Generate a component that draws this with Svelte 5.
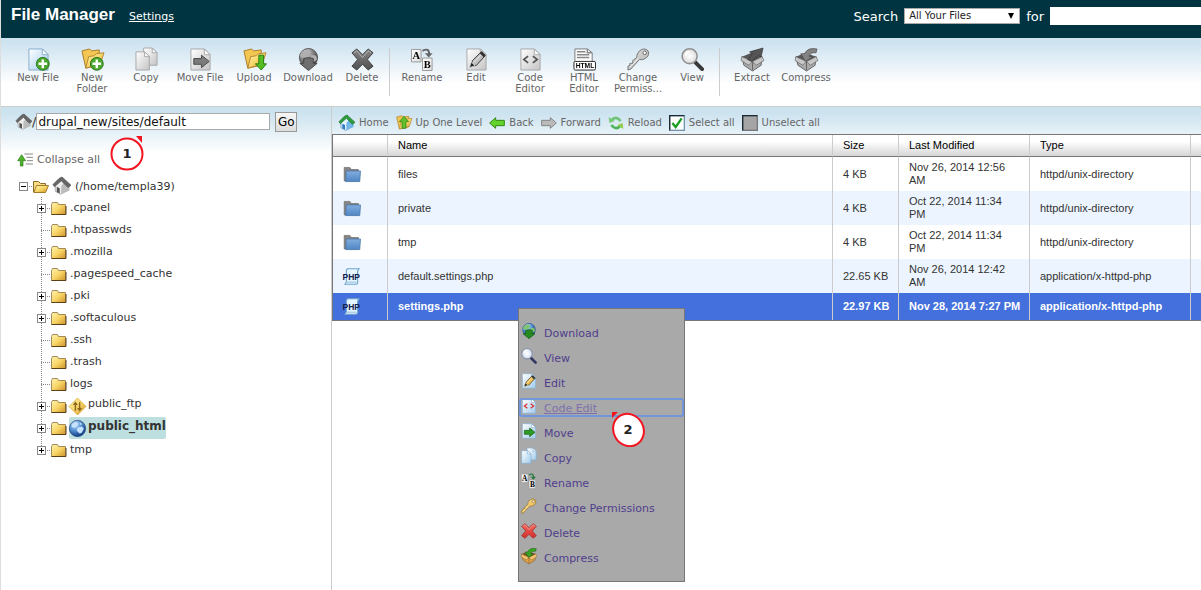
<script>
	let path = $state('drupal_new/sites/default');
	let scope = $state('All Your Files');
	let query = $state('');
	let selected = $state('settings.php');

	const tools = [
		[
			{ icon: 'newfile', label: 'New File', color: true },
			{ icon: 'newfolder', label: 'New Folder', color: true },
			{ icon: 'copy', label: 'Copy' },
			{ icon: 'move', label: 'Move File' },
			{ icon: 'upload', label: 'Upload', color: true },
			{ icon: 'download', label: 'Download' },
			{ icon: 'delete', label: 'Delete' }
		],
		[
			{ icon: 'rename', label: 'Rename' },
			{ icon: 'edit', label: 'Edit' },
			{ icon: 'code', label: 'Code Editor' },
			{ icon: 'html', label: 'HTML Editor' },
			{ icon: 'key', label: 'Change Permiss...' },
			{ icon: 'view', label: 'View' }
		],
		[
			{ icon: 'extract', label: 'Extract' },
			{ icon: 'compress', label: 'Compress' }
		]
	];

	const folders = [
		{ name: '.cpanel', open: true },
		{ name: '.htpasswds' },
		{ name: '.mozilla', open: true },
		{ name: '.pagespeed_cache' },
		{ name: '.pki', open: true },
		{ name: '.softaculous', open: true },
		{ name: '.ssh' },
		{ name: '.trash' },
		{ name: 'logs' },
		{ name: 'public_ftp', open: true, icon: 'ftp' },
		{ name: 'public_html', open: true, icon: 'globe', active: true },
		{ name: 'tmp', open: true }
	];

	const nav = [
		{ icon: 'home', label: 'Home' },
		{ icon: 'up', label: 'Up One Level' },
		{ icon: 'back', label: 'Back' },
		{ icon: 'forward', label: 'Forward' },
		{ icon: 'reload', label: 'Reload' },
		{ icon: 'check', label: 'Select all' },
		{ icon: 'uncheck', label: 'Unselect all' }
	];

	const files = [
		{ name: 'files', size: '4 KB', date: 'Nov 26, 2014 12:56 AM', type: 'httpd/unix-directory' },
		{ name: 'private', size: '4 KB', date: 'Oct 22, 2014 11:34 PM', type: 'httpd/unix-directory' },
		{ name: 'tmp', size: '4 KB', date: 'Oct 22, 2014 11:34 PM', type: 'httpd/unix-directory' },
		{ name: 'default.settings.php', size: '22.65 KB', date: 'Nov 26, 2014 12:42 AM', type: 'application/x-httpd-php' },
		{ name: 'settings.php', size: '22.97 KB', date: 'Nov 28, 2014 7:27 PM', type: 'application/x-httpd-php' }
	];

	const menu = [
		{ icon: 'download', label: 'Download' },
		{ icon: 'view', label: 'View' },
		{ icon: 'edit', label: 'Edit' },
		{ icon: 'code', label: 'Code Edit', focus: true },
		{ icon: 'move', label: 'Move' },
		{ icon: 'copy', label: 'Copy' },
		{ icon: 'rename', label: 'Rename' },
		{ icon: 'key', label: 'Change Permissions' },
		{ icon: 'delete', label: 'Delete' },
		{ icon: 'compress', label: 'Compress' }
	];
</script>

{#snippet page()}
	<path d="M2 1h14l6 6v16H2z" fill="url(#paper)" stroke="#86aecb" />
	<path d="M16 1v6h6z" fill="#fff" stroke="#86aecb" />
{/snippet}

{#snippet openFolder()}
	<path d="M1 3l8-2 2 2 8-1v16l-14 3z" fill="#f2c650" stroke="#a97c2b" />
	<path d="M5 21l3-12 6-1 2-2 8-1-4 12z" fill="url(#gold)" stroke="#b58633" />
{/snippet}

{#snippet plusBadge()}
	<circle cx="16.500" cy="16.500" r="6.700" fill="#4ca72d" stroke="#25711a" />
	<path d="M16.500 12v9M12 16.500h9" stroke="#fff" stroke-width="2.600" />
{/snippet}

{#snippet box()}
	<path d="M1 9l11 6 10-6-1 9-9 6-9-6z" fill="#dfa44a" stroke="#856028" />
	<path d="M12 15v8" stroke="#856028" />
	<path d="M1 9l10-4 11 4-10 6z" fill="#7a5220" />
	<path d="M1 9l-1 4 8 5 4-4zM22 9l2 4-8 5-4-4z" fill="#f0c272" stroke="#856028" stroke-width=".7" />
{/snippet}

{#snippet icon(name)}
	<svg class="icon" viewBox="0 0 24 24" aria-hidden="true">
		{#if name === 'newfile'}
			{@render page()}
			{@render plusBadge()}
		{:else if name === 'newfolder'}
			{@render openFolder()}
			{@render plusBadge()}
		{:else if name === 'copy'}
			<path d="M9 0h9l5 5v13H9z" fill="url(#paper)" stroke="#86aecb" />
			<path d="M18 0v5h5z" fill="#fff" stroke="#86aecb" />
			<path d="M1 4h9l5 5v14H1z" fill="url(#paper)" stroke="#86aecb" />
			<path d="M10 4v5h5z" fill="#fff" stroke="#86aecb" />
		{:else if name === 'move'}
			{@render page()}
			<path d="M5 11h8V7.500l8 6.500-8 6.500V17H5z" fill="#2c9b25" stroke="#165c12" />
		{:else if name === 'upload'}
			{@render openFolder()}
			<path d="M16.500 7.500h5v9h3L19 23l-6-6.500h3.500z" fill="#54bd21" stroke="#267c12" />
		{:else if name === 'download'}
			<circle cx="12" cy="10" r="9.500" fill="url(#earth)" stroke="#315b87" />
			<path d="M5 4l6-2 3 3-3 4-6 1-2-2zM15 7l5 1 1 4-4 3-3-4z" fill="#7fc46f" />
			<path d="M7 11l5-1 5 1v5h4l-9 7.500L3 16h4z" fill="#258b21" stroke="#15591a" />
		{:else if name === 'delete'}
			<path d="M1 5l5-4 6 6 6-6 5 4-6 7 6 7-5 4-6-6-6 6-5-4 6-7z" fill="url(#red)" stroke="#9c2424" />
			<path d="M3 5l3-2 6 7 6-7 3 2" fill="none" stroke="#f5a79d" />
		{:else if name === 'rename'}
			<path d="M.5 1.500h10v13H.5z" fill="url(#sheet)" stroke="#999" />
			<path d="M12 10.500h10v13H12z" fill="url(#sheet)" stroke="#999" />
			<text class="serif" x="5.500" y="12" text-anchor="middle">A</text>
			<text class="serif" x="17" y="21" text-anchor="middle">B</text>
			<path d="M12 3q7-4 7 4" fill="none" stroke="#2b7a3c" stroke-width="2" />
			<path d="M14.500 5.500h8L18.500 10z" fill="#2b7a3c" />
		{:else if name === 'edit'}
			{@render page()}
			<path d="M5 20l3-7L17 4l4 4-9 10z" fill="#f0bd55" stroke="#3b3421" />
			<path d="M9 15l9-9M4.500 20.500l2-6 4 4z" fill="#222" stroke="#fff0be" stroke-width=".8" />
			<path d="M16.500 4.500l4 4" stroke="#333" stroke-width="3" />
		{:else if name === 'code'}
			{@render page()}
			<path d="M9.500 8.500L5 12l4.500 3.500M14.500 8.500L19 12l-4.500 3.500" fill="none" stroke="#d93030" stroke-width="1.800" />
		{:else if name === 'html'}
			<path d="M2 1h13l5 4v13H2z" fill="#fff" stroke="#777" />
			<path d="M4 4h9M4 7h13M4 10h13M15 1v4h5" fill="none" stroke="#888" stroke-width="1.500" />
			<rect x="1" y="14" width="22.500" height="9" rx="1.500" fill="#fff" stroke="#222" />
			<text class="sans" x="12.500" y="21" text-anchor="middle">HTML</text>
		{:else if name === 'key'}
			<path d="M13 3q5-4 9 0 2 5-3 8-3 2-6 1L4 22l-3 1v-4l2-1v-2h3v-3l4-3q0-4 3-7z" fill="url(#brass)" stroke="#94722f" />
			<circle cx="18.500" cy="5" r="1.800" fill="#fff" stroke="#84652b" />
			<path d="M12 11L3 20" stroke="#fff1b4" />
		{:else if name === 'view'}
			<path d="M15 15l7 7" stroke="#343762" stroke-width="4" stroke-linecap="round" />
			<circle cx="9" cy="8.500" r="7.800" fill="url(#lens)" stroke="#8b91a5" stroke-width="1.600" />
			<path d="M5 8q0-4 4-4" fill="none" stroke="#fff" stroke-width="2" />
		{:else if name === 'extract'}
			{@render box()}
			<path d="M7 12l5-6-3-2 14-4-2 9-3-1-7 6z" fill="#555" stroke="#333" stroke-width=".7" />
		{:else if name === 'compress'}
			{@render box()}
			<path d="M23 1q-10-2-13 5H6l5 8 8-5h-4q0-5 7-4z" fill="#38a324" stroke="#1f5d15" stroke-width=".7" />
		{:else if name === 'up'}
			{@render openFolder()}
			<path d="M9 20V10H5l7-8 7 8h-4v10z" fill="#63be2b" stroke="#267c12" />
		{:else if name === 'home' || name === 'house'}
			<path d="M3 10l7-7 9 5v10l-9 5-7-4z" fill={name === 'home' ? '#e5f5ff' : '#eee'} stroke={name === 'home' ? '#4680ad' : '#999'} />
			<path d="M11 12l5-6 6 4v8l-11 5z" fill={name === 'home' ? '#73b7e6' : '#bbb'} />
			<path d="M0 10L8 2l4-2 12 11-4 3-9-9-9 8z" fill={name === 'home' ? '#2e9e3d' : '#666'} stroke={name === 'home' ? '#1c6d31' : '#555'} />
			<path d="M5 13l4 2v7l-4-2z" fill={name === 'home' ? '#2d78c0' : '#555'} />
		{:else if name === 'back'}
			<path d="M1 12l9-8v4h13v8H10v4z" fill="#64d32b" stroke="#368a16" stroke-width="1.500" />
		{:else if name === 'forward'}
			<path d="M23 12l-9-8v4H1v8h13v4z" fill="#bbb" stroke="#858585" stroke-width="1.500" />
		{:else if name === 'reload'}
			<path d="M5 8q7-8 14 1" fill="none" stroke="#6fc47a" stroke-width="4" />
			<path d="M1 3l1 9 8-3z" fill="#78c978" />
			<path d="M19 16q-7 8-14-1" fill="none" stroke="#4eb45a" stroke-width="4" />
			<path d="M23 21l-1-9-8 3z" fill="#91ce4b" />
		{:else if name === 'check' || name === 'uncheck'}
			<rect x="1" y="1" width="22" height="22" fill={name === 'check' ? '#fff' : '#a5a5a5'} stroke={name === 'check' ? '#7792ad' : '#777'} stroke-width="2" />
			<path d="M1 23V1h22" fill="none" stroke="#1c2b33" stroke-width="2" />
			{#if name === 'check'}
				<path d="M5 12l5 6L19 5" fill="none" stroke="#1a9e28" stroke-width="3.500" />
			{/if}
		{:else if name === 'folder'}
			<path d="M1 2h8l2 3h10v16H1z" fill="#858585" stroke="#6b6b6b" />
			<path d="M4 7h20l-1 15H3z" fill="url(#blue)" stroke="#4471a8" />
		{:else if name === 'php'}
			<path d="M5 1h17q-3 3-2 8v11q0 3-4 3H2q3-3 2-7V4q0-3 3-3z" fill="#e6f6ff" stroke="#6fa2ca" stroke-width="1.500" />
			<path d="M5 20h13" stroke="#6fa2ca" />
			<text class="php" x="11" y="17" text-anchor="middle">PHP</text>
		{:else if name === 'collapse'}
			<path d="M5 21v-8H1l6-9 6 9H9v8z" fill="#4eb52a" stroke="#28751a" />
			<path d="M11 3h13M14 8h10M15 13h9M13 18h11" stroke="#888" stroke-width="1.500" />
		{:else if name === 'ftp'}
			<path d="M12 0l12 12-12 12L0 12z" fill="url(#gold)" stroke="#d3a52c" />
			<path d="M9 18V7M15 6v11" stroke="#8c661c" stroke-width="2" />
			<path d="M5.500 10L9 5l3.500 5zM11.500 14l3.500 5 3.500-5z" fill="#8c661c" />
		{:else if name === 'globe'}
			<circle cx="12" cy="12" r="11.500" fill="url(#earth)" stroke="#274980" />
			<path d="M4 6l6-3 3 2-2 4-4 2-3-1zM12 11l6-2 3 3-3 6-3 1-4-4zM15 3l4 3-3 1z" fill="#c6e2fc" />
		{/if}
	</svg>
{/snippet}

{#snippet treeFolder(open)}
	<svg class="tree-folder" viewBox="0 0 16 13" aria-hidden="true">
		{#if open}
			<path d="M.5 12V1.500h5l2 2h5V7" fill="#f7dc83" stroke="#8f6b2a" />
			<path d="M3.500 5.500h12l-3 7H.8z" fill="url(#gold)" stroke="#a37a2c" />
		{:else}
			<path d="M.5 12.500v-10l1-2h5l1 2h7v10z" fill="url(#gold)" stroke="#a38a5b" />
			<path d="M.5 12.500h14.500V4" fill="none" stroke="#594018" />
		{/if}
	</svg>
{/snippet}

{#snippet toggle(open)}
	<button class="toggle" aria-label={open ? 'Collapse' : 'Expand'}>
		<svg viewBox="0 0 9 9" aria-hidden="true">
			<rect x=".5" y=".5" width="8" height="8" fill="#fff" stroke="#888" />
			<path d={open ? 'M2 4.500h5' : 'M2 4.500h5M4.500 2v5'} stroke="#000" />
		</svg>
	</button>
{/snippet}

<svg class="defs" aria-hidden="true">
	<defs>
		<linearGradient id="paper" x2="1" y2="1">
			<stop stop-color="#fff" />
			<stop offset="1" stop-color="#9fcbec" />
		</linearGradient>
		<linearGradient id="sheet" x2="1" y2="1">
			<stop stop-color="#fff" />
			<stop offset="1" stop-color="#ddd" />
		</linearGradient>
		<linearGradient id="gold" x2="1" y2="1">
			<stop stop-color="#fff3b0" />
			<stop offset=".5" stop-color="#f8d667" />
			<stop offset="1" stop-color="#cf922b" />
		</linearGradient>
		<linearGradient id="brass" x2="1" y2="1">
			<stop stop-color="#fbe4a1" />
			<stop offset="1" stop-color="#e5a832" />
		</linearGradient>
		<linearGradient id="red" x2="0" y2="1">
			<stop stop-color="#f06a5e" />
			<stop offset="1" stop-color="#d42c2c" />
		</linearGradient>
		<linearGradient id="blue" x2="0" y2="1">
			<stop stop-color="#82aedf" />
			<stop offset="1" stop-color="#4f86c4" />
		</linearGradient>
		<radialGradient id="earth" cx=".35" cy=".25" r=".7">
			<stop stop-color="#dceeff" />
			<stop offset=".5" stop-color="#5b97d8" />
			<stop offset="1" stop-color="#1c488e" />
		</radialGradient>
		<radialGradient id="lens">
			<stop stop-color="#fff" />
			<stop offset="1" stop-color="#cddff3" />
		</radialGradient>
	</defs>
</svg>

<div class="app">
	<header>
		<h1>File Manager</h1>
		<a href="#settings">Settings</a>
		<form class="search">
			<label for="scope">Search</label>
			<span class="select">
				<select id="scope" bind:value={scope}>
					<option>All Your Files</option>
				</select>
			</span>
			<label for="query">for</label>
			<input id="query" type="text" bind:value={query} />
		</form>
	</header>

	<div class="toolbar">
		{#each tools as group}
			<div class="group">
				{#each group as tool}
					<button class:gray={!tool.color}>
						{@render icon(tool.icon)}
						<span>{tool.label}</span>
					</button>
				{/each}
			</div>
		{/each}
	</div>

	<div class="body">
		<aside>
			<form class="path">
				{@render icon('house')}
				<label for="path">/</label>
				<input id="path" type="text" bind:value={path} />
				<button type="button">Go</button>
			</form>
			<a class="collapse" href="#collapse">{@render icon('collapse')} Collapse all</a>
			<div class="root">
				<span class="branch">{@render toggle(true)}</span>
				{@render treeFolder(true)}
				<a href="#home">{@render icon('house')} (/home/templa39)</a>
			</div>
			<ul>
				{#each folders as folder}
					<li>
						<span class="branch">
							{#if folder.open}{@render toggle(false)}{/if}
						</span>
						{@render treeFolder(false)}
						<a href="#{folder.name}" class:special={folder.icon} class:active={folder.active}>
							{#if folder.icon}{@render icon(folder.icon)}{/if}
							<span>{folder.name}</span>
						</a>
					</li>
				{/each}
			</ul>
			<svg class="marker one" viewBox="0 0 34 36" aria-hidden="true">
				<path d="M26 1h6v7z" fill="#f31420" />
				<circle cx="17" cy="19" r="15.500" fill="#fff" stroke="#f31420" stroke-width="2" />
				<text x="17" y="23" text-anchor="middle">1</text>
			</svg>
		</aside>

		<main>
			<nav>
				{#each nav as item}
					<button>{@render icon(item.icon)} {item.label}</button>
				{/each}
			</nav>
			<table>
				<thead>
					<tr>
						<th class="c-icon"></th>
						<th>Name</th>
						<th class="c-size">Size</th>
						<th class="c-date">Last Modified</th>
						<th class="c-type">Type</th>
						<th class="c-rest"></th>
					</tr>
				</thead>
				<tbody>
					{#each files as file}
						<tr class:selected={selected === file.name} onclick={() => (selected = file.name)}>
							<td>{@render icon(file.name.endsWith('.php') ? 'php' : 'folder')}</td>
							<td>{file.name}</td>
							<td>{file.size}</td>
							<td>{file.date}</td>
							<td>{file.type}</td>
							<td></td>
						</tr>
					{/each}
				</tbody>
			</table>

			<div class="menu">
				{#each menu as item}
					<a href="#{item.icon}" class:focus={item.focus}>
						{@render icon(item.icon)}
						<span>{item.label}</span>
					</a>
				{/each}
			</div>
			<svg class="marker two" viewBox="0 0 34 36" aria-hidden="true">
				<path d="M1 1h6l-6 6z" fill="#f31420" />
				<ellipse cx="17.500" cy="19" rx="15" ry="16.500" transform="rotate(-30 17.500 19)" fill="#fff" stroke="#f31420" stroke-width="2" />
				<text x="17" y="23" text-anchor="middle">2</text>
			</svg>
		</main>
	</div>
</div>

<style>
	:global(body) {
		margin: 0;
		background: #fff;
	}

	.defs {
		position: absolute;
		width: 0;
		height: 0;
	}

	.app {
		display: flex;
		flex-direction: column;
		min-height: 100vh;
		box-sizing: border-box;
		border-left: 1px solid #ddd;
		overflow: hidden;
		font-family: Verdana, 'DejaVu Sans', sans-serif;
		font-size: 11px;
		color: #333;

		& button {
			font-family: inherit;
			cursor: pointer;
		}
	}

	.icon {
		display: block;
		flex: none;
		width: 16px;
		height: 16px;
		overflow: visible;
	}

	.serif {
		font: bold 11px 'Liberation Serif', serif;
	}

	.sans {
		font: bold 7px 'Liberation Sans', sans-serif;
	}

	.php {
		font: bold 12px 'Liberation Sans Narrow', 'Liberation Sans', sans-serif;
		fill: #10204a;
	}

	header {
		display: flex;
		align-items: flex-start;
		height: 38px;
		padding-left: 10px;
		background: #003441;
		color: #fff;

		& h1 {
			margin: 5px 14px 0 0;
			font: bold 17px/20px 'Liberation Sans', Arial, sans-serif;
		}

		& a {
			margin-top: 9px;
			line-height: 16px;
			color: #fff;
		}
	}

	.search {
		display: flex;
		align-items: center;
		gap: 6px;
		margin: 7px 0 0 auto;
		font-size: 13px;

		& input {
			box-sizing: border-box;
			width: 151px;
			height: 18px;
			padding: 0 2px;
			border: none;
			background: #fff;
		}
	}

	.select {
		position: relative;

		& select {
			display: block;
			box-sizing: border-box;
			width: 116px;
			height: 16px;
			padding: 0 4px;
			border: 1px solid #aaa;
			border-radius: 0;
			appearance: none;
			background: #fff;
			color: #222;
			font: 10px/14px Verdana, 'DejaVu Sans', sans-serif;
		}

		&::after {
			content: '';
			position: absolute;
			top: 5px;
			right: 6px;
			border: 3px solid transparent;
			border-top: 6px solid #000;
			border-bottom: none;
			pointer-events: none;
		}
	}

	.toolbar {
		display: flex;
		height: 58px;
		padding: 10px 0 0 10px;
		background: linear-gradient(#cee3f0 5px, #fff 46px);
		border-bottom: 1px solid #ccc;

		& .group {
			display: flex;
			height: 48px;

			& + .group {
				padding-left: 5px;
				border-left: 1px solid #ccc;
			}
		}

		& button {
			display: flex;
			flex-direction: column;
			align-items: center;
			width: 54px;
			padding: 0;
			border: none;
			background: none;
			color: #666;
			font-size: 10px;
			line-height: 11px;
		}

		& .icon {
			width: 23px;
			height: 23px;
			margin-bottom: 1px;
		}

		& .gray .icon {
			filter: grayscale(1);
		}
	}

	.body {
		display: flex;
		flex: 1;
	}

	aside {
		position: relative;
		flex: none;
		width: 330px;
		border-right: 1px solid #ccc;
		background: linear-gradient(#cbe2ef 5px, #fff 46px);

		& a {
			color: #333;
			text-decoration: none;
		}
	}

	.path {
		display: flex;
		align-items: center;
		height: 29px;
		padding-left: 15px;
		font-size: 13px;

		& input {
			box-sizing: border-box;
			width: 234px;
			height: 17px;
			padding: 0 1px;
			border: 1px solid #aaa;
			font: 12px 'DejaVu Sans', sans-serif;
			color: #111;
		}

		& button {
			box-sizing: border-box;
			width: 22px;
			height: 20px;
			margin-left: 5px;
			padding: 0;
			border: 1px solid #999;
			background: linear-gradient(#f6f6f6, #ddd);
			font-size: 12px;
		}
	}

	aside .collapse {
		display: flex;
		align-items: center;
		gap: 4px;
		margin: 16px 0 0 16px;
		line-height: 16px;
		color: #666;
	}

	.root {
		display: flex;
		align-items: center;
		height: 22px;
		margin-top: 7px;
		padding-left: 18px;

		& a {
			display: flex;
			align-items: center;
			gap: 4px;
			margin-left: 4px;
		}

		& .icon {
			width: 18px;
			height: 18px;
		}
	}

	ul {
		margin: 0;
		padding: 0 0 0 36px;
		list-style: none;
	}

	li {
		display: flex;
		align-items: center;
		height: 22px;

		& a {
			display: flex;
			align-items: center;
			margin-left: 2px;
			padding-left: 1px;
			line-height: 24px;
			height: 22px;
		}

		& .special {
			gap: 2px;
			padding-left: 0;

			& span {
				align-self: flex-start;
				line-height: 18px;
			}

			& .icon {
				width: 17px;
				height: 17px;
			}
		}

		& .active {
			border-radius: 2px;
			background: #bedfdf;
			font-size: 12px;
			font-weight: bold;
		}
	}

	.branch {
		display: flex;
		align-items: center;
		flex: none;
		width: 14px;
		height: 22px;
		background:
			repeating-linear-gradient(#888 0 1px, transparent 1px 2px) 4px 0 / 1px 100% no-repeat,
			repeating-linear-gradient(90deg, #888 0 1px, transparent 1px 2px) 4px 11px / 100% 1px no-repeat;
	}

	.root .branch {
		background-size: 0 0, 100% 1px;
	}

	li:last-child .branch {
		background-size: 1px 11px, 100% 1px;
	}

	.toggle {
		display: block;
		width: 9px;
		height: 9px;
		padding: 0;
		border: none;
		background: none;

		& svg {
			display: block;
			width: 9px;
			height: 9px;
		}
	}

	.tree-folder {
		flex: none;
		width: 16px;
		height: 13px;
	}

	main {
		position: relative;
		flex: 1;
		min-width: 0;
		background: linear-gradient(#cbe2ef 5px, #fff 46px);
	}

	nav {
		display: flex;
		align-items: center;
		gap: 7px;
		height: 27px;
		padding: 5px 0 0 7px;
		box-sizing: border-box;

		& button {
			display: flex;
			align-items: center;
			gap: 4px;
			padding: 0;
			border: none;
			background: none;
			color: #666;
			font-size: 10px;
			line-height: 18px;
			white-space: nowrap;
		}
	}

	table {
		width: 100%;
		border-spacing: 0;
		border: solid #777;
		border-width: 1px 0 1px 1px;
		table-layout: fixed;
		background: #fff;
		font: 11px/13px 'Liberation Sans', Arial, sans-serif;

		& th {
			height: 21px;
			border-bottom: 1px solid #777;
			background: linear-gradient(#fff 30%, #d6d6d6);
			color: #000;
			font-weight: normal;
			text-align: left;
		}

		& th,
		& td {
			padding: 0 10px;
			border-right: 1px solid #ccc;
		}

		& th:last-child,
		& td:last-child {
			border-right: none;
			padding: 0;
		}

		& td {
			height: 34px;
		}

		& td:nth-child(3) {
			white-space: nowrap;
		}

		& td .icon {
			width: 18px;
			height: 17px;
		}

		& tr:nth-child(even) td {
			background: #ecf5ff;
		}

		& tbody .selected td {
			height: 27px;
			background: #4370dc;
			color: #fff;
			font-weight: bold;
			white-space: nowrap;
		}
	}

	.c-icon {
		width: 34px;
	}

	.c-size {
		width: 45px;
	}

	.c-date {
		width: 110px;
	}

	.c-type {
		width: 140px;
	}

	.c-rest {
		width: 10px;
	}

	.menu {
		position: absolute;
		top: 201px;
		left: 186px;
		display: flex;
		flex-direction: column;
		gap: 6px;
		box-sizing: border-box;
		width: 167px;
		padding: 14px 0;
		border: 1px solid #777;
		background: #a9a9a9;

		& a {
			display: flex;
			align-items: flex-start;
			gap: 7px;
			box-sizing: border-box;
			height: 19px;
			padding-left: 2px;
			color: #503e8c;
			line-height: 21px;
			text-decoration: none;
		}

		& .focus {
			outline: 2px solid #7196d9;
			outline-offset: -2px;
			border-radius: 3px;
			color: #7d70ad;

			& span {
				text-decoration: underline;
			}
		}
	}

	.marker {
		position: absolute;
		width: 34px;
		height: 36px;

		& text {
			font: bold 13px Verdana, 'DejaVu Sans', sans-serif;
			fill: #222;
		}
	}

	.one {
		top: 28px;
		left: 109px;
	}

	.two {
		top: 304px;
		left: 279px;
	}
</style>
